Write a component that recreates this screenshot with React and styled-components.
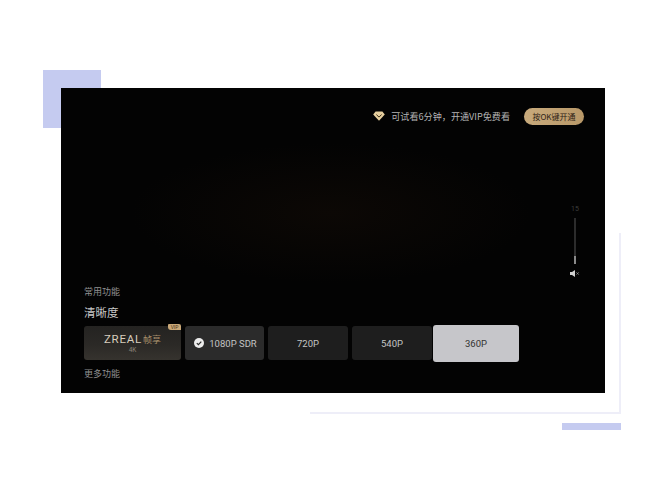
import React from "react";
import styled, { createGlobalStyle } from "styled-components";

const GlobalStyle = createGlobalStyle`
  html, body {
    margin: 0;
    padding: 0;
    background: #ffffff;
    font-family: "Noto Sans CJK SC", "Roboto", sans-serif;
  }
`;
const Page = styled.div`
  position: relative;
  width: 667px;
  height: 500px;
  padding: 88px 62px 0 61px;
  box-sizing: border-box;
  overflow: hidden;
  background: #ffffff;
`;
// decoration behind the player
const BlueSquare = styled.div`
  position: absolute;
  left: 43px;
  top: 70px;
  width: 58px;
  height: 58px;
  background: #c5cbf0;
`;
const OutlineRight = styled.div`
  position: absolute;
  left: 619px;
  top: 233px;
  width: 2px;
  height: 180px;
  background: #eeeef8;
`;
const OutlineBottom = styled.div`
  position: absolute;
  left: 310px;
  top: 412px;
  width: 311px;
  height: 2px;
  background: #eeeef8;
`;
const BlueBar = styled.div`
  position: absolute;
  left: 562px;
  top: 423px;
  width: 59px;
  height: 7px;
  background: #c5cbf0;
`;
const Player = styled.div`
  position: relative;
  width: 544px;
  height: 305px;
  box-sizing: border-box;
  padding: 20px 21px 0 23px;
  display: flex;
  flex-direction: column;
  background:
    radial-gradient(ellipse 200px 70px at 270px 125px, #0c0805 0%, rgba(10, 7, 3, 0) 100%),
    #030303;
`;
const TopBar = styled.div`
  display: flex;
  justify-content: flex-end;
  align-items: center;
  height: 16px;
`;
const TrialText = styled.span`
  margin-left: 6px;
  font-size: 9.1px;
  line-height: 16px;
  color: #b4b4b4;
  white-space: nowrap;
`;
const OpenButton = styled.div`
  margin-left: 14px;
  width: 60px;
  height: 17px;
  border-radius: 9px;
  display: flex;
  align-items: center;
  justify-content: center;
  font-size: 8px;
  color: #2e2216;
  background: linear-gradient(90deg, #c8aa7c, #b89868);
  white-space: nowrap;
`;
const Volume = styled.div`
  align-self: flex-end;
  margin: 81px 0 0 0;
  width: 18px;
  display: flex;
  flex-direction: column;
  align-items: center;
`;
const VolumeValue = styled.div`
  font-family: "Roboto", sans-serif;
  font-size: 7px;
  line-height: 8px;
  color: #3d3d3d;
`;
const VolumeTrack = styled.div`
  margin-top: 5px;
  width: 2px;
  height: 46px;
  display: flex;
  align-items: flex-end;
  background: #2c2c2c;
`;
const VolumeFill = styled.div`
  width: 2px;
  height: 8px;
  background: #8a8a8a;
`;
const MuteIcon = styled.svg`
  margin-top: 6px;
  display: block;
`;
const SectionLabel = styled.div`
  font-size: 9px;
  line-height: 12px;
  color: #909090;
`;
const CommonLabel = styled(SectionLabel)`
  margin-top: 9px;
`;
const MoreLabel = styled(SectionLabel)`
  margin-top: 6px;
`;
const Heading = styled.div`
  margin-top: 7px;
  font-size: 11.5px;
  line-height: 15px;
  color: #c8c8c8;
`;
const Cards = styled.div`
  margin-top: 4px;
  height: 38px;
  display: flex;
  align-items: center;
`;
const Card = styled.div`
  position: relative;
  box-sizing: border-box;
  width: ${(p) => p.$w}px;
  height: ${(p) => (p.$active ? 37 : 34)}px;
  margin-right: ${(p) => p.$gap}px;
  border-radius: 3px;
  display: flex;
  flex-direction: column;
  align-items: center;
  justify-content: center;
  font-family: "Roboto", sans-serif;
  font-size: 9.5px;
  color: ${(p) => (p.$active ? "#333333" : "#c4c4c4")};
  background: ${(p) => (p.$active ? "#c6c6ca" : p.$light ? "#2b2b2b" : "#1e1e1e")};
`;
const ZrealCard = styled(Card)`
  background: linear-gradient(180deg, #242321 0%, #2b2926 55%, #36332e 100%);
`;
const ZrealTitle = styled.div`
  font-size: 11.5px;
  line-height: 12px;
  letter-spacing: 0.8px;
  color: #d8cdbc;
  white-space: nowrap;
  span {
    font-family: "Noto Sans CJK SC", sans-serif;
    font-size: 9px;
    letter-spacing: 0;
    color: #a8906c;
    margin-left: 1px;
  }
`;
const ZrealSub = styled.div`
  font-size: 6.5px;
  line-height: 8px;
  color: #8a8378;
`;
const VipBadge = styled.div`
  position: absolute;
  top: -2px;
  right: 0;
  width: 13px;
  height: 6px;
  border-radius: 1px 2px 0 3px;
  font-size: 5px;
  line-height: 6px;
  text-align: center;
  color: #4a3418;
  background: #c9a878;
`;
const CheckRow = styled.div`
  padding-left: 2px;
  display: flex;
  align-items: center;
  gap: 5px;
  white-space: nowrap;
`;

const resolutions = [
  { label: "720P", w: 80, gap: 4 },
  { label: "540P", w: 80, gap: 1 },
  { label: "360P", w: 86, gap: 0, active: true },
];

const DiamondIcon = () => (
  <svg width="12" height="10" viewBox="0 0 12 10">
    <path d="M2.6 0.5h6.8L11.8 3.6 6 9.7 0.2 3.6z" fill="#e6cf9f" />
    <path d="M3.4 3.6 6 6.1 8.6 3.6" fill="none" stroke="#3a2c14" strokeWidth="1" />
  </svg>
);

const CheckIcon = () => (
  <svg width="10" height="10" viewBox="0 0 10 10">
    <circle cx="5" cy="5" r="5" fill="#ececec" />
    <path d="M2.8 5.1 4.4 6.7 7.3 3.6" fill="none" stroke="#2b2b2b" strokeWidth="1.2" />
  </svg>
);

export default function App() {
  return (
    <Page>
      <GlobalStyle />
      <BlueSquare />
      <OutlineRight />
      <OutlineBottom />
      <BlueBar />
      <Player>
        <TopBar>
          <DiamondIcon />
          <TrialText>可试看6分钟，开通VIP免费看</TrialText>
          <OpenButton>按OK键开通</OpenButton>
        </TopBar>
        <Volume>
          <VolumeValue>15</VolumeValue>
          <VolumeTrack>
            <VolumeFill />
          </VolumeTrack>
          <MuteIcon width="10" height="7" viewBox="0 0 10 7">
            <path d="M0 2h2L5 0v7L2 5H0z" fill="#d0d0d0" />
            <path d="M6.5 2.4 8.7 4.6M8.7 2.4 6.5 4.6" stroke="#9a9a9a" strokeWidth="0.8" />
          </MuteIcon>
        </Volume>
        <CommonLabel>常用功能</CommonLabel>
        <Heading>清晰度</Heading>
        <Cards>
          <ZrealCard $w={97} $gap={4}>
            <ZrealTitle>
              ZREAL<span>帧享</span>
            </ZrealTitle>
            <ZrealSub>4K</ZrealSub>
            <VipBadge>VIP</VipBadge>
          </ZrealCard>
          <Card $w={79} $gap={4} $light>
            <CheckRow>
              <CheckIcon />
              1080P SDR
            </CheckRow>
          </Card>
          {resolutions.map((r) => (
            <Card key={r.label} $w={r.w} $gap={r.gap} $active={r.active}>
              {r.label}
            </Card>
          ))}
        </Cards>
        <MoreLabel>更多功能</MoreLabel>
      </Player>
    </Page>
  );
}
